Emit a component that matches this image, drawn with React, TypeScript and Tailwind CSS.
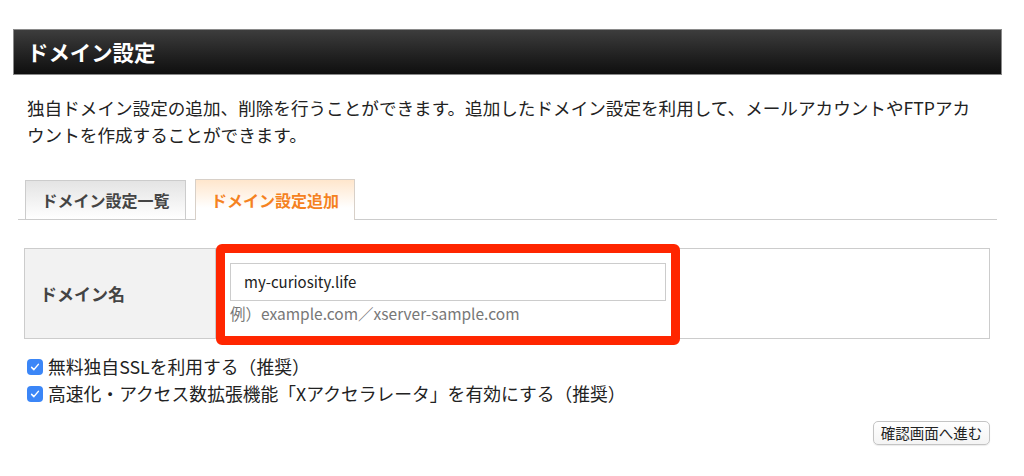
import React from 'react';

const jp = "font-['Noto_Sans_CJK_JP','Noto_Sans',sans-serif]";

const Check = () => (
  <span className="flex h-[16px] w-[16px] shrink-0 items-center justify-center rounded-[4px] bg-[#3b86f7]">
    <svg viewBox="0 0 16 16" className="h-[12px] w-[12px]" fill="none">
      <path d="M3.5 8.5l3 3 6-7" stroke="#fff" strokeWidth="2" strokeLinecap="round" strokeLinejoin="round" />
    </svg>
  </span>
);

export default function App() {
  return (
    <div className={`relative h-[476px] w-[1024px] overflow-hidden bg-white text-[#333] [text-spacing-trim:space-all] ${jp}`}>
      <div className="pl-[13px] pt-[29px]">
        {/* Page header */}
        <div className="flex h-[46px] w-[989px] items-center border border-[#8a8a8a] bg-gradient-to-b from-[#3d3d3d] to-[#0f0f0f] pl-[13px] text-[21.4px] font-bold text-white">
          ドメイン設定
        </div>

        {/* Description */}
        <p className="mt-[19px] w-[970px] pl-[14px] text-[17.6px] leading-[27px] text-[#222]">
          独自ドメイン設定の追加、削除を行うことができます。追加したドメイン設定を利用して、メールアカウントやFTPアカウントを作成することができます。
        </p>

        {/* Tabs */}
        <div className="ml-[5px] mt-[32px] flex h-[40px] w-[979px] items-end gap-[9px] border-b border-[#cccccc] pl-[7px]">
          <div className="-mb-px flex h-[40px] w-[161px] items-center justify-center border border-[#cccccc] bg-gradient-to-b from-[#e4e4e4] to-white text-[16px] font-bold text-[#444]">
            ドメイン設定一覧
          </div>
          <div className="-mb-px flex h-[41px] w-[160px] items-center justify-center border border-b-0 border-[#d8d0c8] bg-gradient-to-b from-[#ffe6cc] to-white to-70% text-[16px] font-bold text-[#f5821f]">
            ドメイン設定追加
          </div>
        </div>

        {/* Form table */}
        <div className="ml-[11px] mt-[28px] flex h-[91px] w-[966px] border border-[#cccccc]">
          <div className="flex w-[191px] items-center border-r border-[#cccccc] bg-[#f2f2f2] pl-[15px] text-[17px] font-bold text-[#444]">
            ドメイン名
          </div>
          <div className="flex flex-col pl-[14px] pt-[14px]">
            <div className="flex h-[38px] w-[436px] items-center border border-[#cccccc] bg-white pl-[13px] text-[15px] text-[#222]">
              my-curiosity.life
            </div>
            <div className="mt-[1px] text-[15.5px] leading-[22px] text-[#777]">例）example.com／xserver-sample.com</div>
          </div>
        </div>

        {/* Options */}
        <div className="ml-[14px] mt-[14px] flex flex-col text-[17.8px] leading-[27px] text-[#222]">
          <label className="flex items-center gap-[5px]">
            <Check />
            無料独自SSLを利用する（推奨）
          </label>
          <label className="flex items-center gap-[5px]">
            <Check />
            高速化・アクセス数拡張機能「Xアクセラレータ」を有効にする（推奨）
          </label>
        </div>

        <div className="mt-[14px] flex w-[977px] justify-end">
          <button className="h-[24px] w-[117px] rounded-[5px] border border-[#c4c4c4] bg-gradient-to-b from-white to-[#f4f4f4] text-[14.5px] leading-none text-[#222] shadow-[0_1px_1px_rgba(0,0,0,0.08)]">
            確認画面へ進む
          </button>
        </div>
      </div>

      {/* Annotation highlight */}
      <div className="pointer-events-none absolute left-[216px] top-[244px] h-[101px] w-[464px] rounded-[6px] border-[9px] border-[#ff2600]" />
    </div>
  );
}
